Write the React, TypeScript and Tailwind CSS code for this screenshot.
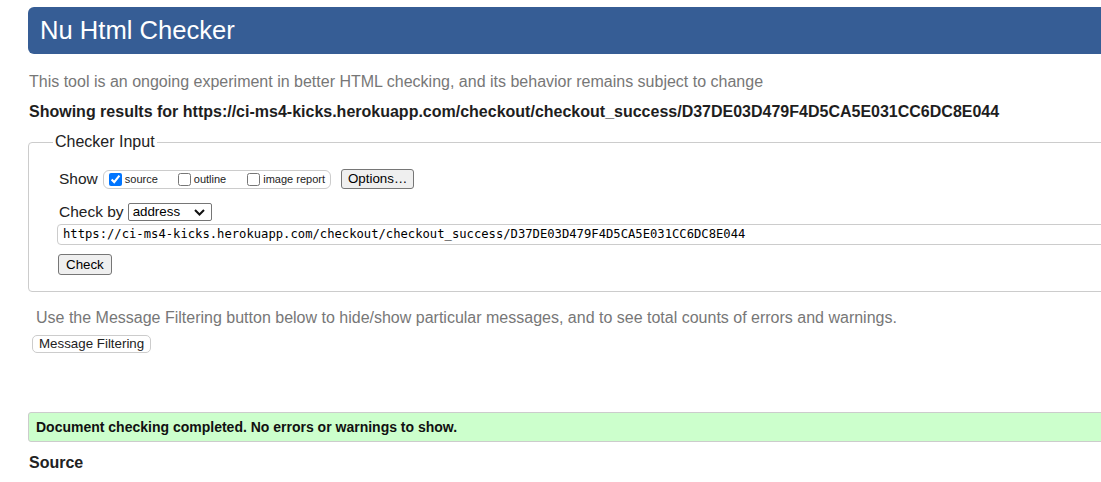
import React from "react";

const sans = { fontFamily: '"Liberation Sans", Arial, sans-serif' };

function Check({ checked }: { checked?: boolean }) {
  return (
    <input
      type="checkbox"
      defaultChecked={checked}
      className="m-0 h-[13px] w-[13px] shrink-0"
    />
  );
}

export default function App() {
  return (
    <div
      className="w-[1101px] h-[482px] overflow-hidden bg-white text-[#222]"
      style={sans}
    >
      <div className="w-[1260px] pl-[28px] pt-[7px]">
        <div className="h-[47px] bg-[#365d95] rounded-l-[6px] flex items-center pl-[12px] text-white text-[25.6px] leading-none">
          Nu Html Checker
        </div>

        <p className="mt-[19px] ml-[1px] text-[16px] leading-[18px] text-[#777]">
          This tool is an ongoing experiment in better HTML checking, and its behavior remains subject to change
        </p>
        <p className="mt-[12px] ml-[1px] text-[16px] leading-[18px] font-bold text-[#1e1e1e]">
          Showing results for https://ci-ms4-kicks.herokuapp.com/checkout/checkout_success/D37DE03D479F4D5CA5E031CC6DC8E044
        </p>

        <fieldset className="mt-[12px] border border-[#ccc] rounded-[4px] pl-[29px] pb-[16px]">
          <legend className="-ml-[5px] px-[2px] text-[16px] leading-[18px] text-[#222]">
            Checker Input
          </legend>

          <div className="mt-[17px] h-[22px] flex items-center">
            <span className="text-[15.5px] leading-[18px] ml-[1px]">Show</span>
            <div className="ml-[5px] h-[19px] flex items-center border border-[#ccc] rounded-[6px] pl-[5px] pr-[5px]">
              <label className="flex items-center">
                <Check checked />
                <span className="ml-[3px] text-[11px] leading-[13px]">source</span>
              </label>
              <label className="flex items-center ml-[20px]">
                <Check />
                <span className="ml-[3px] text-[11px] leading-[13px]">outline</span>
              </label>
              <label className="flex items-center ml-[21px]">
                <Check />
                <span className="ml-[3px] text-[11px] leading-[13px]">image report</span>
              </label>
            </div>
            <button className="ml-[10px] h-[20px] px-[6px] border border-[#767676] bg-[#efefef] rounded-[3px] text-[13.33px] leading-[16px] text-black">
              Options…
            </button>
          </div>

          <div className="mt-[12px] h-[20px] flex items-center">
            <span className="text-[15.5px] leading-[18px] ml-[1px]">Check by</span>
            <div className="ml-[4px] w-[84px] h-[18px] border border-[#767676] rounded-[2px] flex items-center justify-between pl-[4px] pr-[5px] text-[13.33px] leading-[16px] text-black">
              <span>address</span>
              <svg width="11" height="7" viewBox="0 0 11 7" className="mr-[1px]">
                <polyline points="1,1 5.5,5.5 10,1" fill="none" stroke="#111" strokeWidth="2" />
              </svg>
            </div>
          </div>

          <div
            className="mt-[2px] -ml-[1px] h-[21px] border border-[#ccc] rounded-[4px] flex items-center pl-[5px] text-[12.2px] text-black"
            style={{ fontFamily: '"DejaVu Sans Mono", "Liberation Mono", monospace' }}
          >
            https://ci-ms4-kicks.herokuapp.com/checkout/checkout_success/D37DE03D479F4D5CA5E031CC6DC8E044
          </div>

          <button className="mt-[9px] block h-[21px] px-[7px] border border-[#767676] bg-[#efefef] rounded-[3px] text-[13.33px] leading-[16px] text-black">
            Check
          </button>
        </fieldset>

        <p className="mt-[17px] pl-[8px] text-[16px] leading-[18px] text-[#777]">
          Use the Message Filtering button below to hide/show particular messages, and to see total counts of errors and warnings.
        </p>
        <button className="mt-[8px] ml-[4px] block h-[18px] px-[6px] border border-[#ccc] bg-white rounded-[5px] text-[13.33px] leading-[16px] text-[#222]">
          Message Filtering
        </button>

        <div className="mt-[59px] h-[30px] bg-[#ccffcc] border border-[#ccc] rounded-l-[3px] flex items-center pl-[7px] text-[14px] font-bold text-[#111]">
          Document checking completed. No errors or warnings to show.
        </div>

        <h2 className="mt-[12px] ml-[1px] text-[16px] leading-[18px] font-bold text-[#222]">
          Source
        </h2>
      </div>
    </div>
  );
}
